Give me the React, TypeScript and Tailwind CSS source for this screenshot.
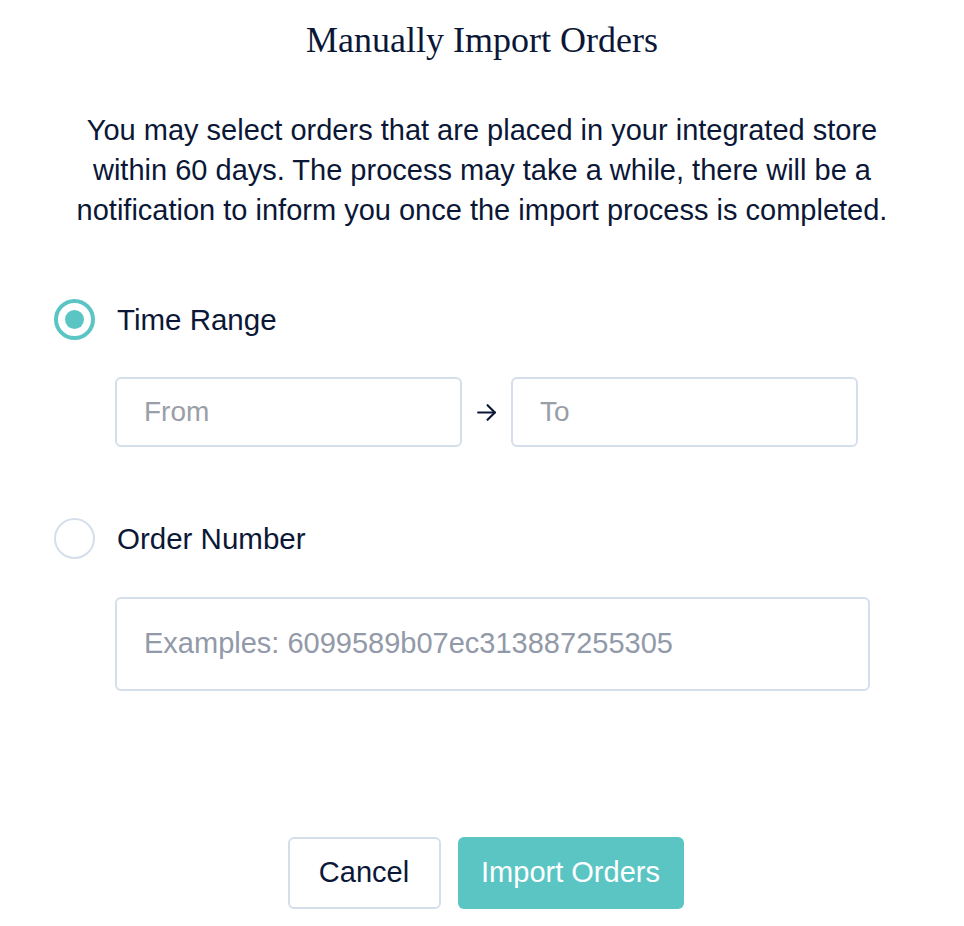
const Radio = ({ checked }: { checked: boolean }) => {
  return checked ? (
    <span className="flex items-center justify-center w-[41px] h-[41px] rounded-full border-[4px] border-[#5bc5c4]">
      <span className="w-[19px] h-[19px] rounded-full bg-[#5bc5c4]" />
    </span>
  ) : (
    <span className="w-[41px] h-[41px] rounded-full border-2 border-[#d5dfeb]" />
  )
}

const App = () => {
  return (
    <div className="w-[964px] h-[926px] bg-white text-[#0b1736] font-['Liberation_Sans',Arial,sans-serif]">
      <h1 className="pt-[20px] text-center text-[36px] leading-[40px] font-['Liberation_Serif','Times_New_Roman',serif]">
        Manually Import Orders
      </h1>

      <p className="mt-[50px] text-center text-[29px] leading-[40px]">
        You may select orders that are placed in your integrated store<br />
        within 60 days. The process may take a while, there will be a<br />
        notification to inform you once the import process is completed.
      </p>

      <div className="mt-[69px] pl-[54px]">
        <label className="flex items-center gap-[22px]">
          <Radio checked={true} />
          <span className="text-[29.5px] leading-[40px]">Time Range</span>
        </label>

        <div className="mt-[37px] ml-[61px] flex items-center">
          <div className="w-[347px] h-[70px] rounded-[6px] border-2 border-[#d5dfeb] flex items-center px-[27px] text-[28px] text-[#9a9ea6]">
            From
          </div>
          <svg className="mx-[14px]" width="21" height="21" viewBox="0 0 20 20" fill="none" stroke="#0b1736" strokeWidth="2" strokeLinecap="round" strokeLinejoin="round">
            <path d="M2 10h16" />
            <path d="M11 3l7 7-7 7" />
          </svg>
          <div className="w-[347px] h-[70px] rounded-[6px] border-2 border-[#d5dfeb] flex items-center px-[27px] text-[28px] text-[#9a9ea6]">
            To
          </div>
        </div>

        <label className="mt-[71px] flex items-center gap-[22px]">
          <Radio checked={false} />
          <span className="text-[29.5px] leading-[40px]">Order Number</span>
        </label>

        <div className="mt-[38px] ml-[61px] w-[755px] h-[94px] rounded-[6px] border-2 border-[#d5dfeb] flex items-center px-[27px] text-[29px] text-[#9299a8]">
          Examples: 6099589b07ec313887255305
        </div>
      </div>

      <div className="mt-[146px] flex justify-center gap-[17px] pl-[7px]">
        <button className="w-[153px] h-[72px] rounded-[6px] border-2 border-[#d5dfeb] bg-white text-[29px] text-[#0b1736]">
          Cancel
        </button>
        <button className="w-[226px] h-[72px] rounded-[6px] bg-[#5bc5c4] text-[29px] text-white">
          Import Orders
        </button>
      </div>
    </div>
  )
}

export default App
